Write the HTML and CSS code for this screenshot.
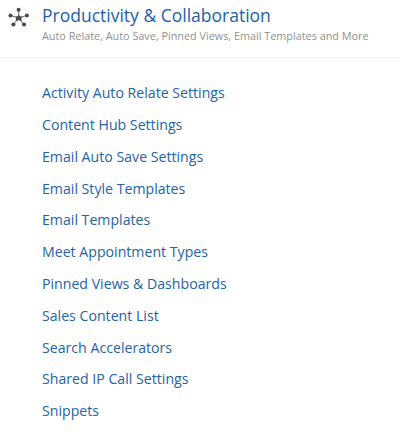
FILE: index.html
```html
<!DOCTYPE html>
<html lang="en">
<head>
<meta charset="utf-8">
<title>Productivity &amp; Collaboration</title>
<link rel="stylesheet" href="styles.css">
</head>
<body>
<header class="header">
  <svg class="icon" viewBox="0 0 22 22" width="22" height="22">
    <path class="spokes" d="M10.7 11V3M10.7 11L2.7 8.4M10.7 11l8-2.6M10.7 11l-5.3 6.5M10.7 11l5.3 6.5"/>
    <path class="hub" d="M10.7 7.6l1.1 1.7 2.1.3-.5 1.9.4 2-1.5.4-1.6-.8-1.6.8-1.5-.4.4-2-.5-1.9 2.1-.3z"/>
    <g class="nodes"><circle cx="10.6" cy="2.8" r="2"/><circle cx="2.5" cy="8.4" r="2"/><circle cx="18.9" cy="8.4" r="2"/><circle cx="5.4" cy="17.5" r="2.1"/><circle cx="16" cy="17.5" r="2.1"/></g>
  </svg>
  <div class="heading">
    <h1 class="title">Productivity &amp; Collaboration</h1>
    <p class="subtitle">Auto Relate, Auto Save, Pinned Views, Email Templates and More</p>
  </div>
</header>
<nav class="links">
  <a>Activity Auto Relate Settings</a>
  <a>Content Hub Settings</a>
  <a>Email Auto Save Settings</a>
  <a>Email Style Templates</a>
  <a>Email Templates</a>
  <a>Meet Appointment Types</a>
  <a>Pinned Views &amp; Dashboards</a>
  <a>Sales Content List</a>
  <a>Search Accelerators</a>
  <a>Shared IP Call Settings</a>
  <a>Snippets</a>
</nav>
</body>
</html>
```
FILE: styles.css
```css
* { box-sizing: border-box; margin: 0; }
body { background: #fff; font-family: "Open Sans", sans-serif; color: #2463a8; }
.header { display: flex; height: 58px; padding: 3px 0 0 8px; border-bottom: 1px solid #f4f4f4; }
.icon { flex: none; margin-top: 4px; fill: #4a4a4c; }
.spokes { fill: none; stroke: #6a6a6c; stroke-width: 1; }
.heading { margin-left: 12px; white-space: nowrap; }
.title { margin-bottom: 1px; font-size: 17.5px; font-weight: 400; line-height: 24px; color: #1c60aa; }
.subtitle { font-size: 10.83px; line-height: 16px; color: #919191; }
.links { display: flex; flex-direction: column; padding: 19.2px 0 0 42px; }
.links a { font-size: 14.15px; line-height: 31.8px; height: 31.8px; white-space: nowrap; }
```
